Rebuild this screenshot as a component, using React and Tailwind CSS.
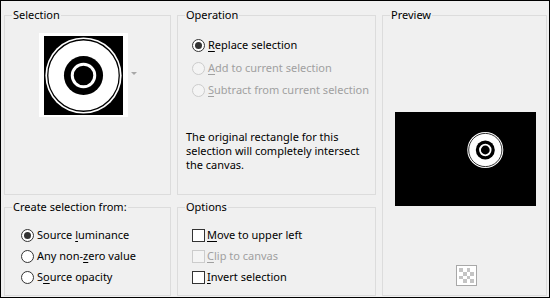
import React from "react";

const font = { fontFamily: '"Noto Sans", "Open Sans", sans-serif' };

function Radio({ checked, disabled }) {
  return (
    <span
      className={
        "flex h-[13px] w-[13px] shrink-0 items-center justify-center rounded-full border " +
        (disabled ? "border-[#cccccc] bg-[#f4f4f4]" : "border-[#333333] bg-white")
      }
    >
      {checked && <span className="h-[7px] w-[7px] rounded-full bg-[#333333]" />}
    </span>
  );
}

function Check({ disabled }) {
  return (
    <span
      className={
        "block h-[13px] w-[13px] shrink-0 border " +
        (disabled ? "border-[#cccccc] bg-[#f4f4f4]" : "border-[#333333] bg-white")
      }
    />
  );
}

function Label({ pre, u, post, disabled }) {
  return (
    <span className={"whitespace-nowrap " + (disabled ? "text-[#a0a0a0]" : "text-black")}>
      {pre}
      <span className="underline underline-offset-2">{u}</span>
      {post}
    </span>
  );
}

function Group({ title, className, children }) {
  return (
    <fieldset className={"m-0 min-w-0 border border-[#dcdcdc] p-0 " + className}>
      <legend className="ml-[7px] px-px text-[11px] leading-[16px] text-black">{title}</legend>
      {children}
    </fieldset>
  );
}

function Target({ size }) {
  return (
    <svg width={size} height={size} viewBox="0 0 80 80">
      <rect width="80" height="80" fill="#000" />
      <circle cx="40" cy="40" r="38.6" fill="#fff" />
      <circle cx="40" cy="40" r="36.2" fill="none" stroke="#000" strokeWidth="1.3" />
      <circle cx="40" cy="40" r="19.8" fill="#000" />
      <circle cx="40" cy="40" r="11.4" fill="none" stroke="#fff" strokeWidth="3" />
    </svg>
  );
}

function Row({ h, gap, control, children }) {
  return (
    <div className={"flex items-start " + h + " " + gap}>
      {control}
      <span className="-mt-[2px] leading-[16px]">{children}</span>
    </div>
  );
}

export default function App() {
  return (
    <div
      className="h-[298px] w-[550px] overflow-hidden border border-black bg-[#f0f0f0] text-[11px]"
      style={font}
    >
      <div className="grid grid-cols-[167px_199px_165px] grid-rows-[188px_97px] gap-x-[6px] gap-y-[4px] pl-[3px] pt-[6px]">
        <Group title="Selection" className="col-start-1 row-start-1">
          <div className="ml-[34px] mt-[10px] flex items-center">
            <div className="h-[84px] w-[89px] bg-white pl-[5px] pt-[3px]">
              <Target size={79} />
            </div>
            <svg width="6" height="4" viewBox="0 0 6 4" className="ml-[3px] mt-[-2px]">
              <path d="M0 0h6L3 3z" fill="#a8a8a8" />
            </svg>
          </div>
        </Group>

        <Group title="Operation" className="col-start-2 row-start-1">
          <div className="mt-[16px] flex flex-col pl-[14px]">
            <Row h="h-[22.5px]" gap="gap-[3px]" control={<Radio checked />}>
              <Label u="R" post="eplace selection" />
            </Row>
            <Row h="h-[22.5px]" gap="gap-[3px]" control={<Radio disabled />}>
              <Label u="A" post="dd to current selection" disabled />
            </Row>
            <Row h="h-[22.5px]" gap="gap-[3px]" control={<Radio disabled />}>
              <Label u="S" post="ubtract from current selection" disabled />
            </Row>
          </div>
          <p className="ml-[8px] mt-[23px] whitespace-nowrap leading-[14px] text-black">
            The original rectangle for this
            <br />
            selection will completely intersect
            <br />
            the canvas.
          </p>
        </Group>

        <Group title="Preview" className="col-start-3 row-span-2 row-start-1">
          <div className="ml-[12px] mt-[89px] h-[94px] w-[141px] bg-black">
            <svg width="141" height="94" viewBox="0 0 141 94">
              <circle cx="90.3" cy="38" r="18" fill="#fff" />
              <circle cx="90.3" cy="38" r="16.6" fill="none" stroke="#000" strokeWidth="0.8" />
              <circle cx="90.3" cy="38" r="9.5" fill="#000" />
              <circle cx="90.3" cy="38" r="5.3" fill="none" stroke="#fff" strokeWidth="1.8" />
            </svg>
          </div>
          <div className="ml-[73px] mt-[59px] h-[21px] w-[21px] border border-[#a8a8a8] bg-white p-[2px]">
            <svg width="15" height="15" viewBox="0 0 4 4" shapeRendering="crispEdges">
              <rect width="4" height="4" fill="#fff" />
              <rect x="0" y="0" width="1" height="1" fill="#c4c4c4" />
              <rect x="2" y="0" width="1" height="1" fill="#c4c4c4" />
              <rect x="1" y="1" width="1" height="1" fill="#c4c4c4" />
              <rect x="3" y="1" width="1" height="1" fill="#c4c4c4" />
              <rect x="0" y="2" width="1" height="1" fill="#c4c4c4" />
              <rect x="2" y="2" width="1" height="1" fill="#c4c4c4" />
              <rect x="1" y="3" width="1" height="1" fill="#c4c4c4" />
              <rect x="3" y="3" width="1" height="1" fill="#c4c4c4" />
            </svg>
          </div>
        </Group>

        <Group title="Create selection from:" className="col-start-1 row-start-2">
          <div className="mt-[14px] flex flex-col pl-[16px]">
            <Row h="h-[21px]" gap="gap-[3px]" control={<Radio checked />}>
              <Label pre="Source " u="l" post="uminance" />
            </Row>
            <Row h="h-[21px]" gap="gap-[3px]" control={<Radio />}>
              <Label pre="Any non-" u="z" post="ero value" />
            </Row>
            <Row h="h-[21px]" gap="gap-[3px]" control={<Radio />}>
              <Label pre="S" u="o" post="urce opacity" />
            </Row>
          </div>
        </Group>

        <Group title="Options" className="col-start-2 row-start-2">
          <div className="mt-[14px] flex flex-col pl-[14px]">
            <Row h="h-[21px]" gap="gap-[2px]" control={<Check />}>
              <Label u="M" post="ove to upper left" />
            </Row>
            <Row h="h-[21px]" gap="gap-[2px]" control={<Check disabled />}>
              <Label u="C" post="lip to canvas" disabled />
            </Row>
            <Row h="h-[21px]" gap="gap-[2px]" control={<Check />}>
              <Label u="I" post="nvert selection" />
            </Row>
          </div>
        </Group>
      </div>
    </div>
  );
}
